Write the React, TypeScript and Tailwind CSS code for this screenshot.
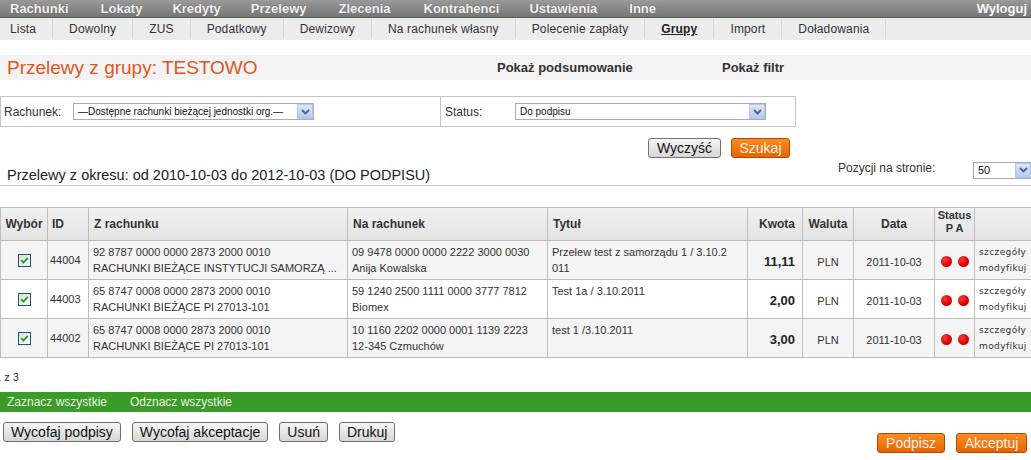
import React from "react";

const F = { fontFamily: '"Liberation Sans", Arial, sans-serif' };

function Check() {
  return (
    <svg width="13" height="13" viewBox="0 0 13 13" className="block">
      <defs>
        <linearGradient id="cbg" x1="0" y1="0" x2="1" y2="1">
          <stop offset="0" stopColor="#dcdcd6" />
          <stop offset="1" stopColor="#ffffff" />
        </linearGradient>
      </defs>
      <rect x="0.5" y="0.5" width="12" height="12" fill="url(#cbg)" stroke="#1c5180" />
      <path d="M3.2 6.2 L5.4 8.6 L9.8 3.8" fill="none" stroke="#21a121" strokeWidth="1.8" />
    </svg>
  );
}

function Arrow() {
  return (
    <div className="w-[16px] h-[15px] bg-gradient-to-b from-[#dbe5fc] to-[#b4c8f4] border border-[#b5c6ee] flex items-center justify-center">
      <svg width="9" height="6" viewBox="0 0 9 6">
        <path d="M1 1 L4.5 4.5 L8 1" fill="none" stroke="#4d6185" strokeWidth="1.8" />
      </svg>
    </div>
  );
}

function Select({ text, w }: { text: string; w: string }) {
  return (
    <div className={`${w} h-[17px] border border-[#a5acb2] bg-white flex items-center justify-between pl-[4px] pr-[0px]`}>
      <span className="text-[10px] text-[#111] whitespace-nowrap">{text}</span>
      <Arrow />
    </div>
  );
}

function Dot() {
  return (
    <div className="w-[11px] h-[11px] rounded-full bg-[radial-gradient(circle_at_35%_35%,#ff3a3a,#d80000_60%,#b00000)]" />
  );
}

const GreyBtn = ({ children, cls = "" }: { children: React.ReactNode; cls?: string }) => (
  <div className={`h-[20px] px-[7px] border border-[#707070] rounded-[3px] bg-gradient-to-b from-[#f6f6f6] to-[#d6d6d6] text-[14px] leading-[18px] text-[#111] ${cls}`}>
    {children}
  </div>
);

const OrangeBtn = ({ children, cls = "" }: { children: React.ReactNode; cls?: string }) => (
  <div className={`h-[20px] px-[7px] border border-[#b44a00] rounded-[3px] bg-gradient-to-b from-[#fb8b22] to-[#e86400] text-[14px] leading-[18px] text-[#fff3e6] ${cls}`}>
    {children}
  </div>
);

const rows = [
  {
    id: "44004",
    from: ["92 8787 0000 0000 2873 2000 0010", "RACHUNKI BIEŻĄCE INSTYTUCJI SAMORZĄ ..."],
    to: ["09 9478 0000 0000 2222 3000 0030", "Anija Kowalska"],
    title: ["Przelew test z samorządu 1 / 3.10.2", "011"],
    amount: "11,11",
    bg: "bg-[#f4f4f4]",
  },
  {
    id: "44003",
    from: ["65 8747 0008 0000 2873 2000 0010", "RACHUNKI BIEŻĄCE PI 27013-101"],
    to: ["59 1240 2500 1111 0000 3777 7812", "Biomex"],
    title: ["Test 1a / 3.10.2011"],
    amount: "2,00",
    bg: "bg-white",
  },
  {
    id: "44002",
    from: ["65 8747 0008 0000 2873 2000 0010", "RACHUNKI BIEŻĄCE PI 27013-101"],
    to: ["10 1160 2202 0000 0001 1139 2223", "12-345 Czmuchów"],
    title: ["test 1 /3.10.2011"],
    amount: "3,00",
    bg: "bg-[#f4f4f4]",
  },
];

const topItems: [string, string][] = [
  ["Rachunki", "ml-[10px]"],
  ["Lokaty", "ml-[32px]"],
  ["Kredyty", "ml-[30px]"],
  ["Przelewy", "ml-[30px]"],
  ["Zlecenia", "ml-[32px]"],
  ["Kontrahenci", "ml-[33px]"],
  ["Ustawienia", "ml-[30px]"],
  ["Inne", "ml-[32px]"],
];

export default function App() {
  const sub = ["Lista", "Dowolny", "ZUS", "Podatkowy", "Dewizowy", "Na rachunek własny", "Polecenie zapłaty", "Grupy", "Import", "Doładowania"];
  const td = "border border-[#bdbdbd]";
  return (
    <div style={F} className="w-[1031px] h-[460px] bg-white overflow-hidden text-[#333]">
      {/* top nav */}
      <div className="h-[18px] bg-gradient-to-b from-[#9a9a9a] to-[#767676] border-b border-[#4e5e4e] flex items-center">
        <div className="flex">
          {topItems.map(([t, m]) => (
            <span key={t} className={`${m} text-[13px] font-bold text-[#f2f2f2] leading-[16px] [text-shadow:0_0_1px_#555]`}>
              {t}
            </span>
          ))}
        </div>
        <span className="ml-auto pr-[4px] text-[13px] font-bold text-[#f8f8f8] leading-[16px]">Wyloguj</span>
      </div>
      {/* sub nav */}
      <div className="h-[22px] bg-[#ececec] flex items-center">
        {sub.map((s, i) => (
          <span
            key={s}
            className={`h-[20px] leading-[20px] text-[12px] tracking-[0.15px] border-r border-[#d6d6d6] ${i === 0 ? "pl-[10px] pr-[16px]" : "px-[16px]"} ${
              s === "Grupy" ? "font-bold underline text-[#222]" : "text-[#333]"
            }`}
          >
            {s}
          </span>
        ))}
      </div>
      {/* title band */}
      <div className="mt-[15px] h-[25px] bg-[#f3f3f3] flex items-center">
        <span className="pl-[7px] text-[19px] text-[#e2561c] leading-[24px] w-[497px]">Przelewy z grupy: TESTOWO</span>
        <span className="text-[13px] font-bold text-[#333] w-[225px]">Pokaż podsumowanie</span>
        <span className="text-[13px] font-bold text-[#333]">Pokaż filtr</span>
      </div>
      {/* filter box */}
      <div className="mt-[16px] w-[796px] h-[31px] border border-[#c4c4c4] flex">
        <div className="w-[440px] border-r border-[#c4c4c4] flex items-center pl-[3px]">
          <span className="text-[12px] w-[69px]">Rachunek:</span>
          <Select w="w-[241px]" text="—Dostępne rachunki bieżącej jednostki org.—" />
        </div>
        <div className="flex-1 flex items-center pl-[4px]">
          <span className="text-[12px] w-[70px]">Status:</span>
          <Select w="w-[251px]" text="Do podpisu" />
        </div>
      </div>
      {/* search buttons */}
      <div className="mt-[11px] w-[796px] flex justify-end gap-[10px] pr-[6px]">
        <GreyBtn cls="w-[73px] text-center">Wyczyść</GreyBtn>
        <OrangeBtn cls="w-[59px] text-center">Szukaj</OrangeBtn>
      </div>
      {/* period row */}
      <div className="h-[28px] border-b border-[#c8c8c8] flex items-end justify-between">
        <span className="pl-[7px] text-[14.5px] text-[#222] leading-[18px] pb-[1px]">
          Przelewy z okresu: od 2010-10-03 do 2012-10-03 (DO PODPISU)
        </span>
        <div className="flex items-center mb-[4px]">
          <span className="text-[12px] text-[#333] w-[135px] mb-[4px]">Pozycji na stronie:</span>
          <div className="w-[58px] h-[17px] border border-[#a5acb2] border-r-0 bg-white flex items-center justify-between pl-[4px]">
            <span className="text-[11px] text-[#111]">50</span>
            <Arrow />
          </div>
        </div>
      </div>
      {/* table */}
      <table className="mt-[21px] w-[1031px] border-collapse table-fixed text-[11px]">
        <colgroup>
          <col className="w-[47px]" />
          <col className="w-[41px]" />
          <col className="w-[259px]" />
          <col className="w-[200px]" />
          <col className="w-[200px]" />
          <col className="w-[55px]" />
          <col className="w-[51px]" />
          <col className="w-[81px]" />
          <col className="w-[40px]" />
          <col className="w-[57px]" />
        </colgroup>
        <thead>
          <tr className="h-[33px] bg-gradient-to-b from-[#f2f2f2] to-[#e2e2e2] text-[12px] font-bold text-[#333]">
            <th className={`${td} text-center font-bold`}>Wybór</th>
            <th className={`${td} text-left pl-[4px] font-bold`}>ID</th>
            <th className={`${td} text-left pl-[5px] font-bold`}>Z rachunku</th>
            <th className={`${td} text-left pl-[5px] font-bold`}>Na rachunek</th>
            <th className={`${td} text-left pl-[5px] font-bold`}>Tytuł</th>
            <th className={`${td} text-right pr-[7px] font-bold`}>Kwota</th>
            <th className={`${td} text-center font-bold`}>Waluta</th>
            <th className={`${td} text-center font-bold`}>Data</th>
            <th className={`${td} text-center font-bold text-[11px] leading-[13px] align-top pt-[1px]`}>
              Status
              <br />P A
            </th>
            <th className={`${td}`}></th>
          </tr>
        </thead>
        <tbody>
          {rows.map((r) => (
            <tr key={r.id} className={`h-[39px] ${r.bg}`}>
              <td className={`${td}`}>
                <div className="flex justify-center">
                  <Check />
                </div>
              </td>
              <td className={`${td} pl-[2px]`}>{r.id}</td>
              <td className={`${td} align-top pl-[4px] pt-[3px] leading-[16px] whitespace-nowrap`}>
                {r.from.map((l) => (
                  <div key={l}>{l}</div>
                ))}
              </td>
              <td className={`${td} align-top pl-[4px] pt-[3px] leading-[16px] whitespace-nowrap overflow-hidden`}>
                {r.to.map((l) => (
                  <div key={l}>{l}</div>
                ))}
              </td>
              <td className={`${td} align-top pl-[4px] pt-[3px] leading-[16px] whitespace-nowrap`}>
                {r.title.map((l) => (
                  <div key={l}>{l}</div>
                ))}
              </td>
              <td className={`${td} text-right pr-[7px] pt-[4px] text-[13px] font-bold text-[#222]`}>{r.amount}</td>
              <td className={`${td} text-center pt-[4px]`}>PLN</td>
              <td className={`${td} text-center pt-[4px]`}>2011-10-03</td>
              <td className={`${td} pt-[2px]`}>
                <div className="flex justify-center gap-[6px]">
                  <Dot />
                  <Dot />
                </div>
              </td>
              <td
                className={`${td} align-top pl-[4px] pt-[3px] text-[9px] leading-[16px] tracking-[0.4px] whitespace-nowrap`}
                style={{ fontFamily: '"DejaVu Sans", Verdana, sans-serif' }}
              >
                <div>szczegóły</div>
                <div>modyfikuj</div>
              </td>
            </tr>
          ))}
        </tbody>
      </table>
      {/* pager */}
      <div className="mt-[12px] h-[14px] overflow-hidden">
        <span className="block -ml-[5px] text-[11px] leading-[14px] text-[#333]">1 z 3</span>
      </div>
      {/* green bar */}
      <div className="mt-[8px] h-[20px] bg-[#3a9b29] flex items-center text-[12px] text-[#e8f4e0]">
        <span className="pl-[7px] w-[130px]">Zaznacz wszystkie</span>
        <span>Odznacz wszystkie</span>
      </div>
      {/* action buttons */}
      <div className="flex justify-between items-start">
        <div className="flex gap-[11px] pl-[3px] mt-[10px]">
          <GreyBtn>Wycofaj podpisy</GreyBtn>
          <GreyBtn>Wycofaj akceptacje</GreyBtn>
          <GreyBtn>Usuń</GreyBtn>
          <GreyBtn>Drukuj</GreyBtn>
        </div>
        <div className="flex gap-[11px] pr-[4px] mt-[21px]">
          <OrangeBtn cls="w-[68px] text-center">Podpisz</OrangeBtn>
          <OrangeBtn cls="w-[71px] text-center">Akceptuj</OrangeBtn>
        </div>
      </div>
    </div>
  );
}
